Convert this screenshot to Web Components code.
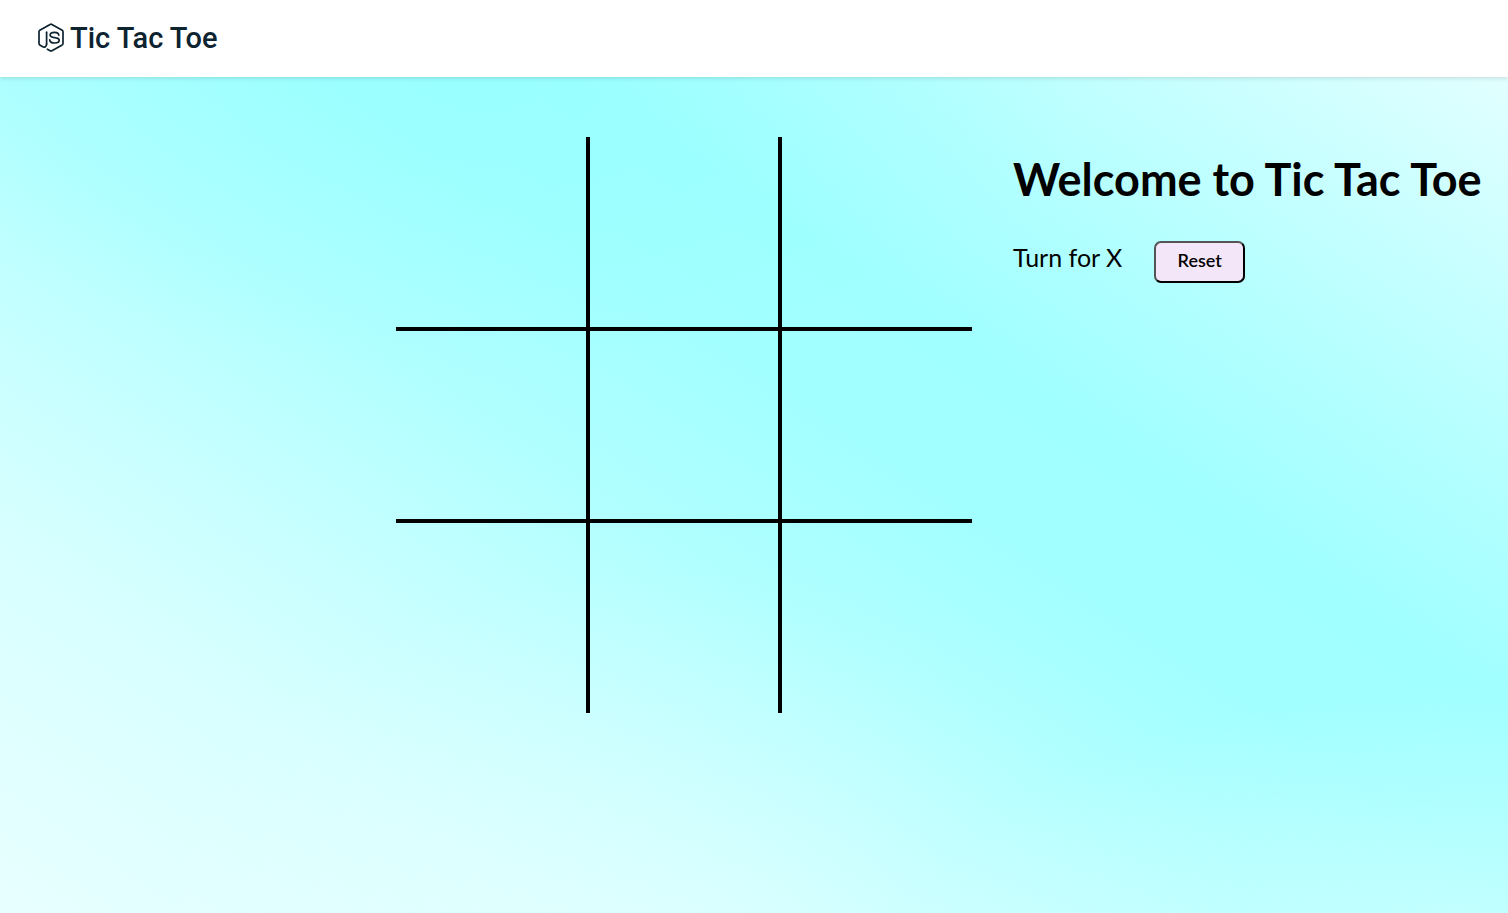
<!DOCTYPE html>
<html lang="en">
<head>
<meta charset="utf-8">
<meta name="viewport" content="width=device-width, initial-scale=1">
<title>Tic Tac Toe</title>
<style>
  body { margin: 0; }
</style>
</head>
<body>
<ttt-app></ttt-app>

<template id="app-template">
  <style>
    :host {
      display: flex;
      flex-direction: column;
      min-height: 100vh;
      font-family: Lato, "Noto Sans", sans-serif;
      color: #000;
    }
    main {
      flex: 1;
      display: flex;
      justify-content: flex-end;
      align-items: flex-start;
      gap: 41px;
      padding: 60px 0;
      box-sizing: border-box;
      background:
        radial-gradient(600px 260px at 100% 104%, rgba(255,255,255,.36), rgba(255,255,255,0)),
        radial-gradient(560px 380px at 46% 104%, rgba(255,255,255,.26), rgba(255,255,255,0)),
        radial-gradient(600px 300px at 32% 0%, rgba(140,255,255,.35), rgba(140,255,255,0)),
        linear-gradient(34deg, #e8ffff 0%, #d8ffff 20%, #c8ffff 31%, #b0ffff 45%, #a2ffff 57%, #a0ffff 66%, #b8ffff 80%, #ccffff 90%, #e2ffff 100%);
    }
    ttt-info { flex: 0 0 495px; }
  </style>
  <ttt-nav>Tic Tac Toe</ttt-nav>
  <main>
    <ttt-board></ttt-board>
    <ttt-info><span slot="title">Welcome to Tic Tac Toe</span></ttt-info>
  </main>
</template>

<template id="nav-template">
  <style>
    :host { display: block; position: relative; z-index: 1; background: #fff; box-shadow: 0 1px 5px rgba(0,0,0,.15); }
    nav { display: flex; align-items: center; height: 77px; padding: 0 38px 2px; box-sizing: border-box; }
    a {
      display: flex; align-items: center; gap: 6px;
      color: #0d2330; text-decoration: none;
      font: 500 29px/40px Roboto, sans-serif;
    }
    svg { display: block; width: 26px; height: 30px; }
  </style>
  <nav>
    <a href="#">
      <svg viewBox="0 0 26 30" fill="none" stroke="currentColor" stroke-width="1.7" stroke-linejoin="round" stroke-linecap="round" aria-hidden="true">
        <path d="M8.600 21C8.600 24.200 6.300 24.600 4.300 23.400L1.800 21.900Q1 21.400 1 20.400V8.800Q1 7.800 1.800 7.300L12.100 1.400Q13 .9 13.900 1.400L24.200 7.300Q25 7.800 25 8.800V20.400Q25 21.400 24.200 21.900L13.900 27.700Q13 28.200 12.100 27.700L9.400 26.200"/>
        <path d="M8.600 21V9.200"/>
        <path d="M20.800 12.100C20.500 10.200 18.800 9.400 16.400 9.400C13.700 9.400 12.100 10.500 12.100 12.100C12.100 14 13.900 14.400 16.500 14.700C19.600 15 21.200 15.700 21.200 17.300C21.200 19.300 19.500 20 16.700 20C13.700 20 11.900 19 11.700 16.900"/>
      </svg>
      <slot></slot>
    </a>
  </nav>
</template>

<template id="board-template">
  <style>
    :host { display: grid; grid-template-columns: repeat(3, 192px); grid-auto-rows: 192px; }
    button {
      appearance: none; margin: 0; padding: 0; background: none; border: 0 solid #000; border-radius: 0;
      box-sizing: border-box; font: 64px/64px Lato, sans-serif; color: #000; cursor: pointer;
    }
    button:not(:nth-of-type(3n)) { border-right-width: 2px; }
    button:not(:nth-of-type(3n+1)) { border-left-width: 2px; }
    button:nth-of-type(-n+6) { border-bottom-width: 2px; }
    button:nth-of-type(n+4) { border-top-width: 2px; }
  </style>
  <button aria-label="Cell 1"></button><button aria-label="Cell 2"></button><button aria-label="Cell 3"></button>
  <button aria-label="Cell 4"></button><button aria-label="Cell 5"></button><button aria-label="Cell 6"></button>
  <button aria-label="Cell 7"></button><button aria-label="Cell 8"></button><button aria-label="Cell 9"></button>
</template>

<template id="info-template">
  <style>
    :host { display: block; padding-top: 10px; }
    h1 { margin: 0; font-size: 45px; line-height: 64px; font-weight: 700; white-space: nowrap; }
    .row { display: flex; align-items: flex-start; gap: 32px; margin-top: 30px; }
    .turn { font-size: 25px; line-height: 32px; font-weight: 400; }
    button {
      width: 91px; height: 42px; padding: 0 0 4px; border: 2px outset #000; border-radius: 7px;
      background: #f3e6f9; color: #000; font: 600 18px/24px Lato, sans-serif; cursor: pointer;
    }
  </style>
  <h1><slot name="title"></slot></h1>
  <div class="row">
    <span class="turn">Turn for X</span>
    <button type="button">Reset</button>
  </div>
</template>

<script>
  const define = (name, id) => customElements.define(name, class extends HTMLElement {
    constructor() {
      super();
      this.attachShadow({ mode: "open" })
        .append(document.getElementById(id).content.cloneNode(true));
    }
  });
  define("ttt-nav", "nav-template");
  define("ttt-board", "board-template");
  define("ttt-info", "info-template");
  define("ttt-app", "app-template");
</script>
</body>
</html>
